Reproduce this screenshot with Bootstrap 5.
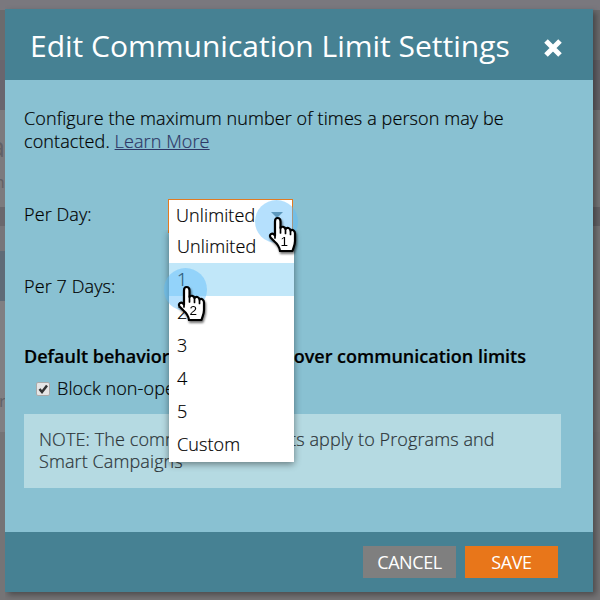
<!DOCTYPE html>
<html lang="en">
<head>
<meta charset="utf-8">
<title>Edit Communication Limit Settings</title>
<link href="https://cdn.jsdelivr.net/npm/bootstrap@5.3.0/dist/css/bootstrap.min.css" rel="stylesheet">
<style>
body{font-family:"Open Sans",sans-serif;font-size:18px;font-weight:300;letter-spacing:.105px;line-height:23px;color:#000;width:600px;height:600px;overflow:hidden;
background:linear-gradient(#7a787e 10px,#6b6b6d 10px 60px,#656369 60px 110px,#777678 110px 207px,#666468 207px 226px,#777678 226px 432px,#757476 432px)}
.backdrop-strip{width:5px;height:600px;background:linear-gradient(#7a787e 10px,#6b6b6d 10px 60px,#69666e 60px 110px,#7c7b7e 110px 207px,#6a686d 207px 226px,#77767a 226px 251px,#5f6b77 251px 301px,#807f82 301px 432px,#757476 432px);overflow:hidden;color:#626166;font-weight:400}
.ghost-a{top:135px;left:-10px;font-size:27px}
.ghost-b{top:170px;left:-11px;font-size:17px}
.ghost-c{top:389px;left:-1px;font-size:17px}
.dialog{width:588px;height:583px;margin-top:9px;background:#89c1d2;box-shadow:3px 3px 6px rgba(0,0,0,.35)}
.dialog-head{height:71px;background:#468193;padding:3px 30px 0 25px}
.dialog-title{font-size:30px;line-height:40px;letter-spacing:0;color:#fff}
.close-icon{margin-top:3px}
.dialog-body{height:452px;padding:27px 32px 0 19px;-webkit-text-stroke:.2px currentColor}
.dialog-foot{height:60px;background:#468193;padding:0 35px;gap:9px}
.intro{width:500px;height:46px}
.intro a{color:#2d3765}
.field{height:34px}
.field label{width:144px;padding-top:4px}
.f-day{margin-top:46px}
.f-week{margin-top:38px}
.picker{width:125px;height:34px;border:1px solid #e17b22;background:#fff;padding:0 9px 2px 7px}
.menu{top:31px;left:1px;width:125px;height:232px;background:#fff;box-shadow:0 2px 7px rgba(0,0,0,.45);z-index:3;clip-path:inset(0 -10px -10px -10px)}
.menu li{height:33px;line-height:33px;padding-left:8px}
.menu li.hot{background:#c1e7f9}
.dot{width:43px;height:43px;border-radius:50%;background:rgba(91,187,250,.45);z-index:4}
.hand{z-index:5;width:32px;height:40px;filter:drop-shadow(1px 2px 1px rgba(0,0,0,.55));letter-spacing:0}
.heading{width:502px;margin-top:40px;font-size:18px;font-weight:600;letter-spacing:0;line-height:23px;color:#000}
.check-row{margin-top:9px;padding-left:12px;gap:7px;height:23px}
.note{margin-top:14px;width:537px;height:74px;background:#b5dae2;color:#2c3438;padding:14px 15px;line-height:22px}
.action{width:93px;height:32px;border:0;border-radius:0;padding:0;color:#fff;font-size:18px;letter-spacing:-.4px}
.action.cancel{background:#7f7f7f}.action.save{background:#e8761a}
</style>
<script src="https://cdn.jsdelivr.net/npm/bootstrap@5.3.0/dist/js/bootstrap.bundle.min.js"></script>
</head>
<body class="m-0 d-flex">
<div class="backdrop-strip position-relative flex-shrink-0"><span class="position-absolute ghost-a">a</span><span class="position-absolute ghost-b">m</span><span class="position-absolute ghost-c">r</span></div>
<svg width="0" height="0" class="position-absolute"><defs><g id="pointer"><path d="M9.500 2C11.500 2 12.500 3.500 12.500 5.500V12C13.500 10 17 10.500 17.500 13C19 11 22 12 22.500 14.500C24.500 13 27 14.500 27 17.500V25C27 29 25.500 31 24.500 35H12C11.500 31 9.500 28 6.500 25.500L2.500 21.500C.800 18.500 4 16.500 6 18.500L7 19.500V5.500C7 3.500 7.500 2 9.500 2Z" fill="#fff" stroke="#000" stroke-width="2.200" stroke-linejoin="round"/><path d="M12.500 11V17M17.500 13V17.500M22.500 15V18.500M7 18V22" stroke="#000" stroke-width="1.700" stroke-linecap="round"/></g></defs></svg>
<main class="dialog flex-shrink-0">
<header class="dialog-head d-flex align-items-center justify-content-between"><h1 class="dialog-title fw-normal m-0 text-nowrap">Edit Communication Limit Settings</h1>
<svg class="close-icon" width="20" height="20" viewBox="0 0 20 20"><path d="M3 3L17 17M17 3L3 17" stroke="#fff" stroke-width="5"/></svg></header>
<section class="dialog-body">
<p class="intro m-0 text-nowrap">Configure the maximum number of times a person may be<br>contacted. <a href="#">Learn More</a></p>
<div class="field f-day d-flex align-items-start position-relative"><label>Per Day:</label>
<div class="position-relative"><div class="picker d-flex align-items-center justify-content-between"><span>Unlimited</span><svg width="12" height="6"><path d="M0 0H12L6 6Z" fill="#607d8a"/></svg></div>
<ul class="menu list-unstyled position-absolute m-0"><li>Unlimited</li><li class="hot">1</li><li>2</li><li>3</li><li>4</li><li>5</li><li>Custom</li></ul>
<div class="dot position-absolute" style="left:87px;top:1px"></div><svg class="hand position-absolute" style="left:100px;top:17px" viewBox="0 0 32 40"><use href="#pointer"/><text x="12.500" y="29.800" font-size="13.500" font-weight="400" font-family="Liberation Sans, sans-serif">1</text></svg>
<div class="dot position-absolute" style="left:-4px;top:69px"></div><svg class="hand position-absolute" style="left:9px;top:86px" viewBox="0 0 32 40"><use href="#pointer"/><text x="12.500" y="29.800" font-size="13.500" font-weight="400" font-family="Liberation Sans, sans-serif">2</text></svg>
</div></div>
<div class="field f-week d-flex align-items-start"><label>Per 7 Days:</label></div>
<h2 class="heading d-flex justify-content-between mb-0 text-nowrap"><span>Default behavior for people</span><span>over communication limits</span></h2>
<div class="check-row d-flex align-items-center"><svg width="14" height="14"><rect x=".5" y=".5" width="13" height="13" rx="1.500" fill="#e6e6e6" stroke="#aaa"/><path d="M3.500 7L6 10L11 3.500" fill="none" stroke="#333" stroke-width="2.500"/></svg><span>Block non-operational</span></div>
<div class="note text-nowrap">NOTE: The communication limits apply to Programs and<br>Smart Campaigns</div>
</section>
<footer class="dialog-foot d-flex align-items-center justify-content-end"><button class="btn action cancel">CANCEL</button><button class="btn action save">SAVE</button></footer>
</main>
</body>
</html>
